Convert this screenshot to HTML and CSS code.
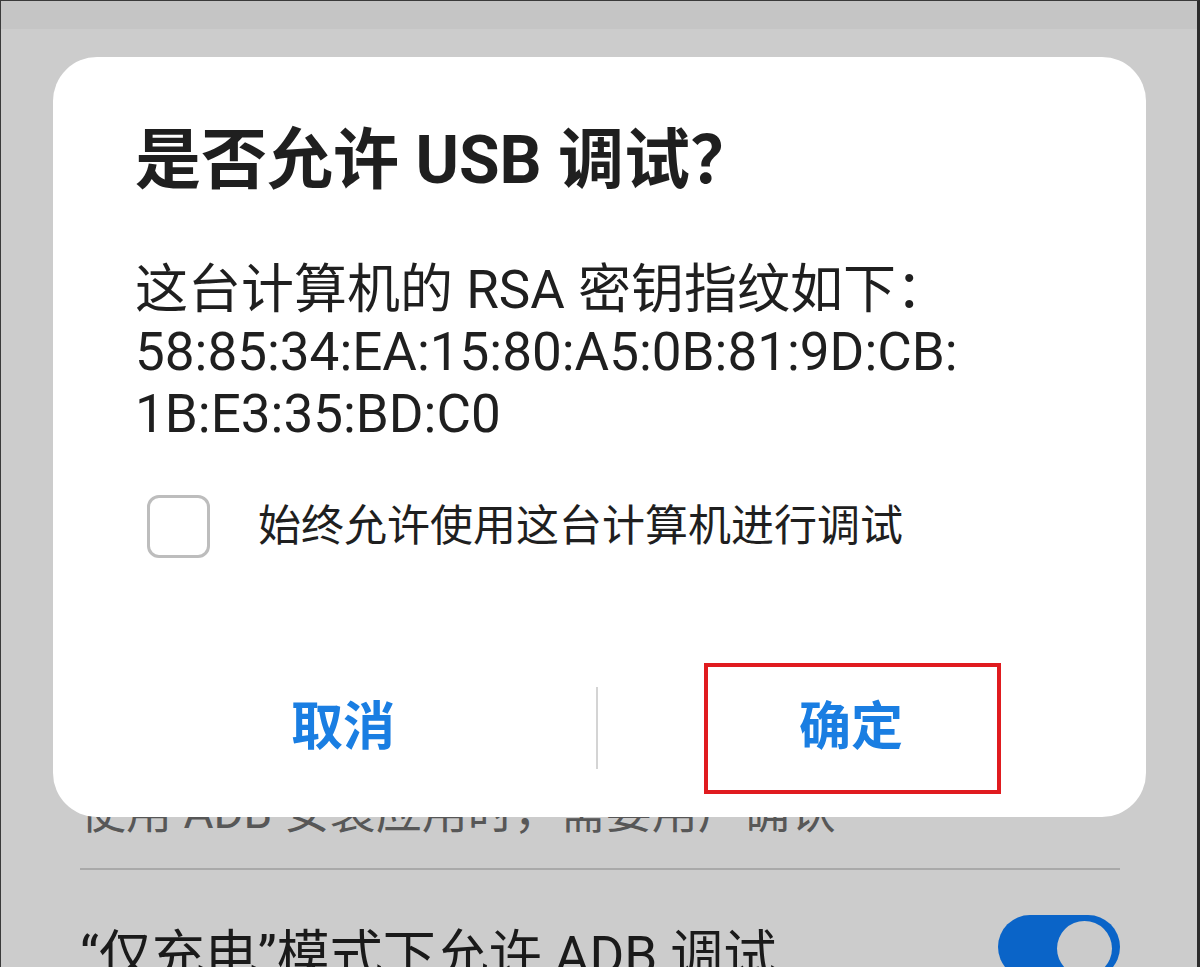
FILE: index.html
```html
<!DOCTYPE html>
<html lang="zh-CN">
<head>
<meta charset="utf-8">
<title>是否允许 USB 调试？</title>
<link rel="stylesheet" href="styles.css">
</head>
<body>
<div class="screen">
  <div class="statusbar"></div>
  <div class="settings">
    <div class="item">
      <div class="item-text">
        <div class="item-title">USB 调试</div>
        <div class="item-sub">连接 USB 后启用调试模式</div>
      </div>
    </div>
    <div class="item">
      <div class="item-text">
        <div class="item-title">撤销 USB 调试授权</div>
        <div class="item-sub">清除已授权计算机的调试权限</div>
      </div>
    </div>
    <div class="item">
      <div class="item-text">
        <div class="item-title">选择模拟位置信息应用</div>
        <div class="item-sub">尚未设置模拟位置信息应用</div>
      </div>
    </div>
    <div class="item">
      <div class="item-text">
        <div class="item-title">监控 ADB 安装应用</div>
        <div class="item-sub">使用 ADB 安装应用时，需要用户确认</div>
      </div>
    </div>
    <div class="item item-toggle">
      <div class="item-text">
        <div class="item-title item-title-dark">“仅充电”模式下允许 ADB 调试</div>
      </div>
      <div class="switch on"><span class="knob"></span></div>
    </div>
  </div>

  <div class="dialog">
    <div class="dialog-title">是否允许 USB 调试？</div>
    <div class="dialog-msg">这台计算机的 RSA 密钥指纹如下：<br>58:85:34:EA:15:80:A5:0B:81:9D:CB:<br>1B:E3:35:BD:C0</div>
    <div class="check-row">
      <span class="checkbox"></span>
      <span class="check-label">始终允许使用这台计算机进行调试</span>
    </div>
    <div class="buttons">
      <div class="btn">取消</div>
      <div class="btn-divider"></div>
      <div class="btn">确定</div>
    </div>
    <div class="highlight"></div>
  </div>
</div>
</body>
</html>
```

FILE: styles.css
```css
html, body {
  margin: 0;
  padding: 0;
  background: #cbcbcb;
}

.screen {
  position: relative;
  width: 1200px;
  height: 967px;
  overflow: hidden;
  box-sizing: border-box;
  background: #cccccc;
  border-top: 1px solid #3a3a3a;
  border-left: 1px solid #3a3a3a;
  border-right: 3px solid #2c2c2c;
  font-family: Roboto, "Noto Sans CJK SC", sans-serif;
}

.statusbar {
  height: 28px;
  background: #c5c5c5;
}

.settings {
  padding: 137px 77px 0 79px;
}

.item {
  display: flex;
  justify-content: space-between;
  padding: 26px 0;
  border-bottom: 2px solid #a9a9a9;
}

.item-title {
  font-size: 54px;
  line-height: 62px;
  color: #1e1e1e;
}

.item-sub {
  font-size: 46px;
  line-height: 60px;
  color: #575757;
}

.item-toggle {
  padding-top: 45px;
  border-bottom: none;
}

.item-toggle .item-text {
  margin-top: 10px;
}

.item-title-dark {
  font-size: 53px;
  color: #1a1a1a;
}

.switch {
  position: relative;
  width: 122px;
  height: 64px;
  border-radius: 32px;
  background: #0a64c8;
  flex: none;
}

.switch .knob {
  position: absolute;
  top: 6px;
  right: 8px;
  width: 55px;
  height: 55px;
  border-radius: 50%;
  background: #cbcbcb;
}

/* dialog */
.dialog {
  position: absolute;
  left: 52px;
  top: 56px;
  width: 1093px;
  height: 760px;
  background: #ffffff;
  border-radius: 44px;
}

.dialog-title {
  margin: 64px 0 0 82px;
  font-size: 66px;
  line-height: 80px;
  font-weight: 700;
  color: #1f1f1f;
}

.dialog-msg {
  margin: 58px 60px 0 82px;
  font-size: 53px;
  line-height: 62px;
  color: #1f1f1f;
  white-space: nowrap;
}

.check-row {
  display: flex;
  align-items: center;
  margin: 50px 0 0 94px;
}

.checkbox {
  width: 63px;
  height: 63px;
  box-sizing: border-box;
  border: 3px solid #bdbdbd;
  border-radius: 12px;
  background: #fff;
  flex: none;
}

.check-label {
  margin-left: 48px;
  font-size: 43px;
  line-height: 63px;
  color: #1f1f1f;
}

.buttons {
  display: flex;
  align-items: center;
  height: 132px;
  margin: 104px 42px 0 37px;
}

.btn {
  flex: 1;
  text-align: center;
  font-size: 52px;
  line-height: 70px;
  font-weight: 700;
  color: #1a7ee2;
}

.btn-divider {
  width: 2px;
  height: 82px;
  background: #d4d4d4;
}

.highlight {
  position: absolute;
  left: 651px;
  top: 606px;
  width: 297px;
  height: 131px;
  box-sizing: border-box;
  border: 4px solid #e01b1f;
}
```
